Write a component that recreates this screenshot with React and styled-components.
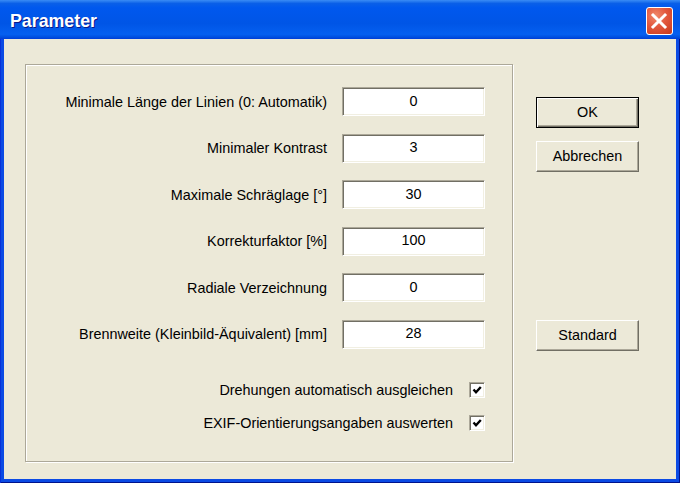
import React from 'react';
import styled, { createGlobalStyle } from 'styled-components';

const Global = createGlobalStyle`
  html, body { margin: 0; padding: 0; width: 680px; height: 483px; overflow: hidden; background: #0831d9; }
  #root { width: 680px; height: 483px; }
  * { box-sizing: border-box; }
`;

const Window = styled.div`
  width: 680px;
  height: 483px;
  display: flex;
  flex-direction: column;
  font-family: "Liberation Sans", Arial, sans-serif;
  font-size: 14.4px;
  color: #000;
`;

const TitleBar = styled.div`
  height: 39px;
  flex: none;
  display: flex;
  align-items: center;
  justify-content: space-between;
  padding: 3px 7px 0 10px;
  background: linear-gradient(180deg, #3a8cf5 0%, #0a5fe8 9%, #0058ee 20%, #0055e6 60%, #0560f0 88%, #0050e0 95%, #003dd7 100%);
`;

const Title = styled.span`
  color: #fff;
  font-weight: bold;
  font-size: 17.8px;
  text-shadow: 1px 1px #0a1a8a;
`;

const CloseButton = styled.button`
  width: 27px;
  height: 28px;
  padding: 0;
  border: 1px solid #fff;
  border-radius: 3px;
  background: radial-gradient(circle at 35% 30%, #f08a6c 0%, #e2583e 45%, #c8391b 100%);
  display: flex;
  align-items: center;
  justify-content: center;
`;

const Frame = styled.div`
  flex: 1;
  display: flex;
  padding: 0 4px 4px;
  background: #0b4ae4;
  box-shadow: inset 1px 0 #0831d9, inset -1px -1px #00138c;
`;

const Client = styled.div`
  flex: 1;
  display: flex;
  align-items: stretch;
  background: #ece9d8;
  padding: 25px 0 17px 21px;
`;

const GroupBox = styled.div`
  width: 488px;
  border: 1px solid #aca899;
  box-shadow: inset 1px 1px #fff, 1px 1px #fff;
  padding: 22px 27px 0 0;
  display: flex;
  flex-direction: column;
`;

const FieldGrid = styled.div`
  display: grid;
  grid-template-columns: 1fr 143px;
  grid-auto-rows: 29px;
  column-gap: 15px;
  row-gap: 17.6px;
  align-items: center;
`;

const Label = styled.label`
  text-align: right;
  white-space: nowrap;
`;

const Field = styled.input`
  width: 143px;
  height: 29px;
  margin: 0;
  padding: 0 0 2px;
  font-family: inherit;
  font-size: 14.4px;
  color: #000;
  text-align: center;
  background: #fff;
  border: 1px solid;
  border-color: #aca899 #fff #fff #aca899;
  box-shadow: inset 1px 1px #716f64, inset -1px -1px #f1efe2;
  outline: none;
`;

const CheckList = styled.div`
  margin-top: 33px;
  display: flex;
  flex-direction: column;
  gap: 17px;
`;

const CheckRow = styled.div`
  display: flex;
  justify-content: flex-end;
  align-items: center;
  gap: 16px;
  height: 16px;
  white-space: nowrap;
`;

const CheckBox = styled.span`
  width: 16px;
  height: 16px;
  flex: none;
  background: #fff;
  border: 1px solid;
  border-color: #aca899 #fff #fff #aca899;
  box-shadow: inset 1px 1px #716f64, inset -1px -1px #f1efe2;
  display: flex;
  align-items: center;
  justify-content: center;
`;

const ButtonColumn = styled.div`
  margin-left: 23px;
  padding-top: 33px;
  display: flex;
  flex-direction: column;
`;

const Button = styled.button`
  width: 103px;
  height: 31px;
  margin: 0;
  margin-top: ${p => p.$gap || 0}px;
  padding: 0 0 1px;
  font-family: inherit;
  font-size: 14.4px;
  color: #000;
  background: #ece9d8;
  border: 1px solid;
  border-color: ${p => (p.$default ? '#000' : '#fff #716f64 #716f64 #fff')};
  box-shadow: ${p =>
    p.$default
      ? 'inset 1px 1px #fff, inset -1px -1px #716f64, inset -2px -2px #aca899'
      : 'inset -1px -1px #aca899'};
`;

const fields = [
  ['Minimale Länge der Linien (0: Automatik)', '0'],
  ['Minimaler Kontrast', '3'],
  ['Maximale Schräglage [°]', '30'],
  ['Korrekturfaktor [%]', '100'],
  ['Radiale Verzeichnung', '0'],
  ['Brennweite (Kleinbild-Äquivalent) [mm]', '28'],
];

const checks = ['Drehungen automatisch ausgleichen', 'EXIF-Orientierungsangaben auswerten'];

const Check = () => (
  <svg width="10" height="10" viewBox="0 0 10 10">
    <polyline points="1.5,4.5 4,7.2 8.8,2" fill="none" stroke="#000" strokeWidth="2.4" />
  </svg>
);

export default function App() {
  return (
    <Window>
      <Global />
      <TitleBar>
        <Title>Parameter</Title>
        <CloseButton aria-label="Schließen">
          <svg width="25" height="26" viewBox="0 0 25 26">
            <path d="M6 7 L18 19 M18 7 L6 19" stroke="#fff" strokeWidth="3" strokeLinecap="square" />
          </svg>
        </CloseButton>
      </TitleBar>
      <Frame>
        <Client>
          <GroupBox>
            <FieldGrid>
              {fields.map(([label, value]) => (
                <React.Fragment key={label}>
                  <Label>{label}</Label>
                  <Field readOnly defaultValue={value} />
                </React.Fragment>
              ))}
            </FieldGrid>
            <CheckList>
              {checks.map(c => (
                <CheckRow key={c}>
                  <span>{c}</span>
                  <CheckBox>
                    <Check />
                  </CheckBox>
                </CheckRow>
              ))}
            </CheckList>
          </GroupBox>
          <ButtonColumn>
            <Button $default>OK</Button>
            <Button $gap={13}>Abbrechen</Button>
            <Button $gap={148}>Standard</Button>
          </ButtonColumn>
        </Client>
      </Frame>
    </Window>
  );
}
